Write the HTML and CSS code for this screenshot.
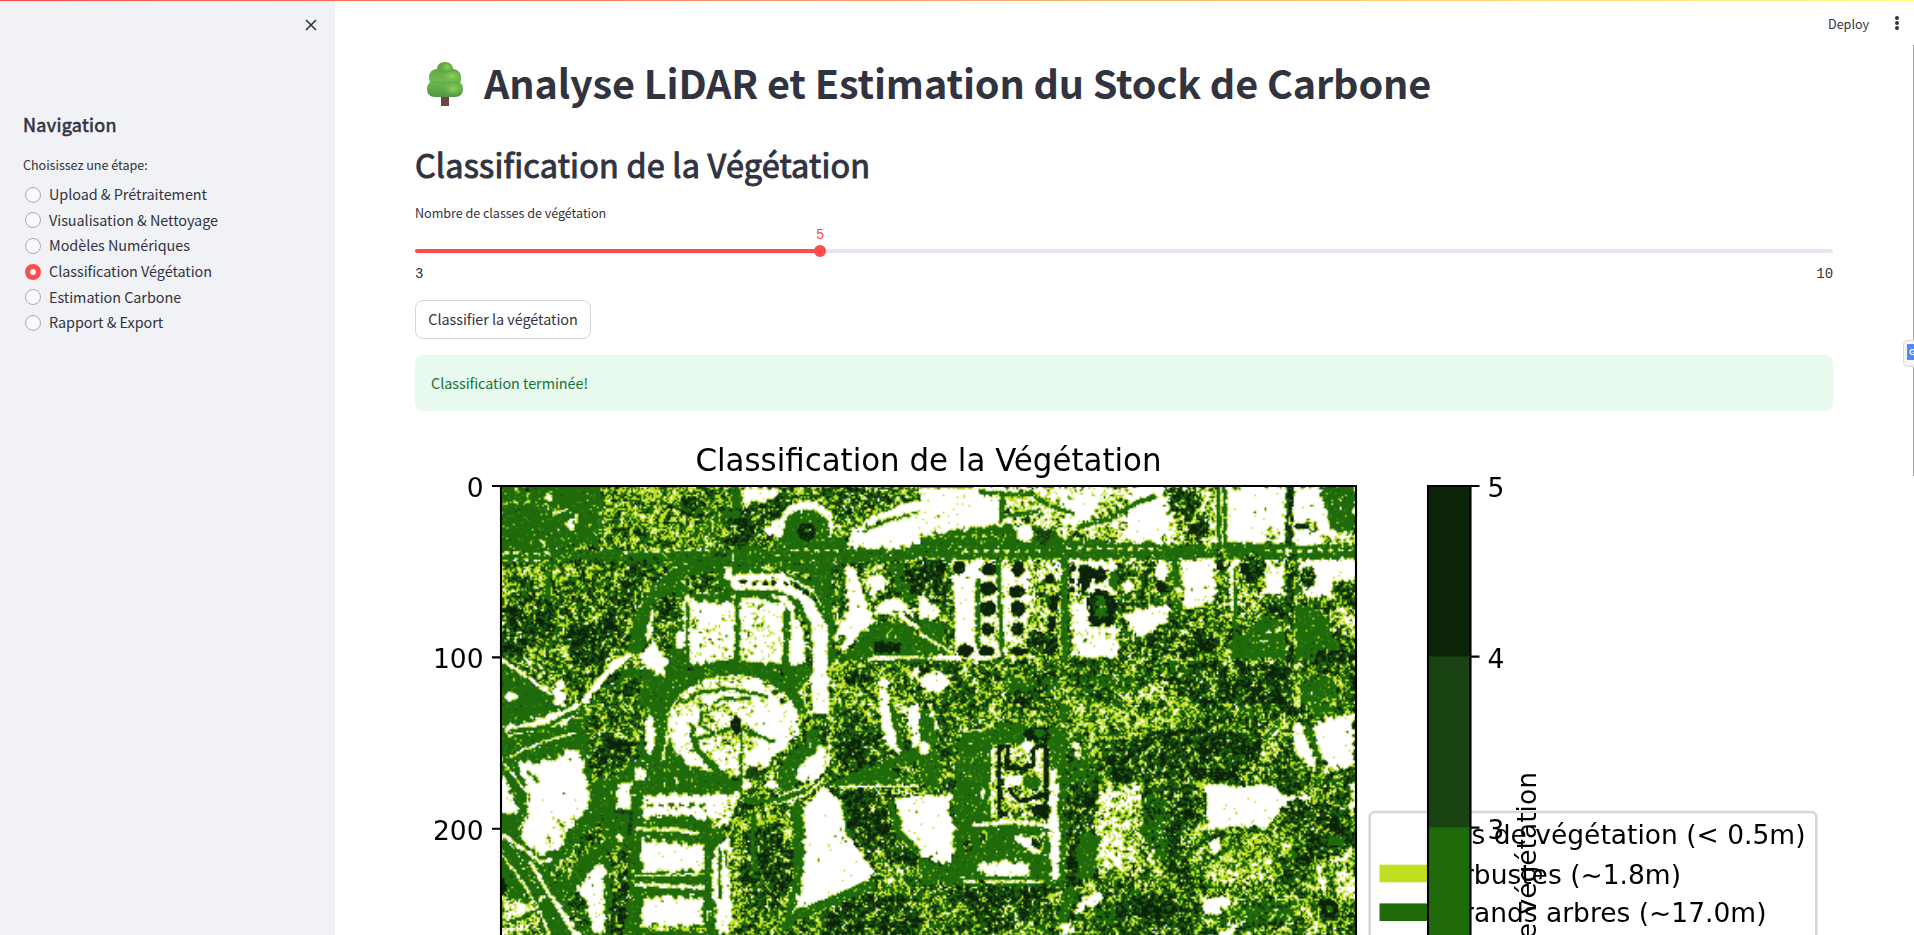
FILE: index.html
```html
<!DOCTYPE html>
<html lang="fr">
<head>
<meta charset="utf-8">
<title>Analyse LiDAR</title>
<link rel="stylesheet" href="styles.css">
</head>
<body>
<div class="decoration"></div>
<div class="app">
  <aside class="sidebar">
    <div class="sidebar-top">
      <svg class="close" viewBox="0 0 12 12" width="12" height="12"><path d="M1 1L11 11M11 1L1 11" stroke="#31333f" stroke-width="1.6" fill="none"/></svg>
    </div>
    <h2 class="nav-title">Navigation</h2>
    <p class="nav-label">Choisissez une étape:</p>
    <div class="radios">
      <label class="radio"><span class="dot"></span><span class="name">Upload &amp; Prétraitement</span></label>
      <label class="radio"><span class="dot"></span><span class="name">Visualisation &amp; Nettoyage</span></label>
      <label class="radio"><span class="dot"></span><span class="name">Modèles Numériques</span></label>
      <label class="radio"><span class="dot on"></span><span class="name">Classification Végétation</span></label>
      <label class="radio"><span class="dot"></span><span class="name">Estimation Carbone</span></label>
      <label class="radio"><span class="dot"></span><span class="name">Rapport &amp; Export</span></label>
    </div>
  </aside>
  <main class="main">
    <header class="toolbar">
      <span class="deploy">Deploy</span>
      <svg class="kebab" viewBox="0 0 4 14" width="4" height="14" fill="#31333f"><circle cx="2" cy="2" r="2"/><circle cx="2" cy="7" r="2"/><circle cx="2" cy="12" r="2"/></svg>
    </header>
    <div class="block">
      <h1 class="title">
        <svg class="tree" viewBox="0 0 36 44" width="36" height="44">
          <defs>
            <linearGradient id="leaf" x1="0" y1="0" x2="0" y2="1"><stop offset="0" stop-color="#5f9f45"/><stop offset=".55" stop-color="#6fb94b"/><stop offset="1" stop-color="#4f9646"/></linearGradient>
            <radialGradient id="shine"><stop offset="0" stop-color="#8fd257"/><stop offset="1" stop-color="#7cc653" stop-opacity="0"/></radialGradient>
          </defs>
          <rect x="14" y="32" width="8" height="12" fill="#6f4448"/>
          <path d="M18 0C13 0 10 3 10 7C5 7 2 11 2 15C2 18 3 19 2.500 21C1 22 0 24 0 27C0 32 3 35 8 35H28C33 35 36 32 36 27C36 24 35 22 33.500 21C34 19 34 17 34 15C34 11 31 7 26 7C26 3 23 0 18 0Z" fill="url(#leaf)"/>
          <ellipse cx="20" cy="5" rx="6" ry="5" fill="url(#shine)"/>
          <ellipse cx="25" cy="14" rx="9" ry="6" fill="url(#shine)"/>
          <ellipse cx="26" cy="27" rx="10" ry="7" fill="url(#shine)"/>
          <path d="M5 20Q18 22 32 20M11 9Q18 12 25 8" stroke="#4b8a42" stroke-opacity=".35" fill="none"/>
        </svg>
        <span class="title-text">Analyse LiDAR et Estimation du Stock de Carbone</span>
      </h1>
      <h2 class="heading">Classification de la Végétation</h2>
      <p class="label">Nombre de classes de végétation</p>
      <div class="slider">
        <div class="track"><div class="fill"></div><div class="thumb"><span class="value">5</span></div></div>
        <div class="ticks"><span>3</span><span>10</span></div>
      </div>
      <button class="button">Classifier la végétation</button>
      <div class="alert">Classification terminée!</div>
      <div class="figure">
        <canvas class="raster" id="raster" width="500" height="264"></canvas>
        <svg class="axes" viewBox="415 427 1418 508" width="1418" height="508">
          <g class="mpl">
            <text x="928.500" y="470.500" class="mpl-title" text-anchor="middle" textLength="466" lengthAdjust="spacingAndGlyphs">Classification de la Végétation</text>
            <g text-anchor="end"><text x="483.600" y="497">0</text><text x="483.600" y="668">100</text><text x="483.600" y="839.500">200</text></g>
            <path d="M501 940V486H1356V940M492 486H501M492 657.400H501M492 828.700H501" class="line"/>
            <rect x="1369.700" y="812" width="446.600" height="160" rx="5" class="legend"/>
            <rect x="1379.500" y="864.700" width="53" height="17.600" fill="#bfdf20"/>
            <rect x="1379.500" y="903.400" width="53" height="17.600" fill="#1f6b0c"/>
            <g text-anchor="end"><text x="1805.500" y="844">Pas de végétation (&lt; 0.5m)</text><text x="1681" y="884">Arbustes (~1.8m)</text><text x="1766.500" y="921.500">Grands arbres (~17.0m)</text></g>
            <rect x="1428" y="486" width="42.500" height="171" fill="#0b2409"/>
            <rect x="1428" y="656.400" width="42.500" height="172" fill="#1a4314"/>
            <rect x="1428" y="827.400" width="42.500" height="120" fill="#1f6b0c"/>
            <path d="M1428 940V486H1470.500V940M1470 486H1479.500M1470 656.600H1479.500M1470 827.600H1479.500" class="line"/>
            <text x="1487.500" y="496.500">5</text><text x="1487.500" y="667.500">4</text><text x="1487.500" y="838.500">3</text>
            <text transform="translate(1536 772) rotate(-90)" text-anchor="end">Classe de végétation</text>
          </g>
        </svg>
      </div>
    </div>
    <div class="scrollbar"></div>
    <div class="extension"><span>G</span></div>
  </main>
</div>
<script src="raster.js"></script>
</body>
</html>
```
FILE: styles.css
```css
* { box-sizing: border-box; }
body {
  margin: 0;
  height: 935px;
  overflow: hidden;
  background: #fff;
  color: #31333f;
  font-family: "Noto Sans CJK SC", "Noto Sans", sans-serif;
  font-size: 14.4px;
  letter-spacing: -0.04px;
}
h1, h2, p { margin: 0; }
.decoration {
  position: absolute;
  top: 0; left: 0;
  width: 100%;
  height: 1px;
  z-index: 3;
  background: linear-gradient(90deg, #ff4b4b, #fffd80);
}
.app { display: flex; height: 935px; }

.sidebar { width: 335px; flex: none; background: #f0f2f6; padding-left: 23px; }
.sidebar-top { height: 104px; padding: 19px 18px 0 0; text-align: right; line-height: 0; }
.nav-title { font-size: 18px; font-weight: 400; -webkit-text-stroke: .6px #31333f; letter-spacing: .3px; line-height: 40px; height: 48px; }
.nav-label { font-size: 12.6px; line-height: 26px; height: 30px; }
.radios { display: flex; flex-direction: column; padding-left: 2px; }
.radio { display: flex; align-items: center; gap: 8px; height: 25.6px; line-height: 24px; }
.name { height: 25px; }
.dot { width: 16px; height: 16px; flex: none; border-radius: 50%; border: 1px solid #a9abb3; background: #f9f9fb; }
.dot.on { border: 5px solid #ff4b4b; background: #fff; }

.main { flex: 1; position: relative; overflow: hidden; }
.toolbar { height: 48px; display: flex; justify-content: flex-end; align-items: center; gap: 26px; padding: 0 15px 2px 0; font-size: 12.6px; }
.block { padding: 0 81px 0 80px; display: flex; flex-direction: column; align-items: stretch; }
.title { display: flex; align-items: center; height: 72px; padding-left: 12px; gap: 21px; font-size: 39.6px; font-weight: 700; letter-spacing: -0.14px; line-height: 66px; white-space: nowrap; }
.title-text { height: 70px; }
.tree { flex: none; }
.heading { height: 82px; padding-top: 1px; font-size: 32.4px; font-weight: 400; -webkit-text-stroke: 1px #31333f; letter-spacing: .2px; line-height: 86px; }
.label { height: 45px; font-size: 12.6px; line-height: 22px; }
.slider { height: 53px; }
.track { position: relative; height: 4px; margin-top: 2px; border-radius: 4px; background: #e3e7f0; }
.fill { width: 28.57%; height: 4px; border-radius: 4px; background: #ff4b4b; }
.thumb { position: absolute; left: 28.57%; top: -4px; width: 12px; height: 12px; margin-left: -6px; border-radius: 50%; background: #ff4b4b; }
.value { position: absolute; left: -4px; width: 20px; top: -18px; text-align: center; color: #ff4b4b; font: 14px/16px "Liberation Mono", monospace; }
.ticks { display: flex; justify-content: space-between; margin-top: 13px; font: 14px/16px "Liberation Mono", monospace; }
.button { align-self: flex-start; width: 176px; height: 39px; padding: 0; border: 1px solid #d6d6d9; border-radius: 8px; background: #fff; color: #31333f; font: inherit; letter-spacing: inherit; line-height: 35px; padding-bottom: 2px; }
.alert { height: 56px; margin-top: 16px; padding-left: 16px; border-radius: 8px; background: #e8f9ee; color: #177233; line-height: 56px; }
.figure { display: grid; margin-top: 16px; height: 508px; overflow: hidden; letter-spacing: 0; }
.raster, .axes { grid-area: 1 / 1; }
.raster { width: 856px; height: 452px; margin: 59px 0 0 86px; }
.axes { position: relative; }
.mpl { font: 26.5px "DejaVu Sans", sans-serif; fill: #000; }
.mpl-title { font-size: 31.8px; }
.line { fill: none; stroke: #000; stroke-width: 2.1; }
.legend { fill: #fff; fill-opacity: .8; stroke: #ccc; stroke-opacity: .8; stroke-width: 2.6; }
.scrollbar { position: absolute; right: 0; top: 45px; width: 1px; height: 431px; background: #a3a3a3; }
.extension { position: absolute; right: 0; top: 340px; width: 11px; height: 27px; padding: 3px 0 0 3px; border: 1px solid #d9d9d9; border-right: 0; border-radius: 5px 0 0 5px; background: #f4f4f4; overflow: hidden; }
.extension span { display: block; width: 16px; height: 16px; padding-left: 2px; background: #4b8bf5; color: #fff; font: bold 9px/16px "Liberation Sans", sans-serif; }
```
FILE: raster.js
```js
// Vegetation classes on a 500-cell-wide grid. Each tile lists shapes in tile units
// (3 units per screen pixel): texture, kind (p polygon, l line, d dashed line, e ellipse), points.
const W = 500, H = 264, CELL = 1.713;
const COLORS = [[255,255,255],[191,223,32],[31,107,12],[26,67,20],[11,36,9],[70,138,16]];
const TEX = {
  W: [.985,.998,1,1], L: [.78,.97,1,1], G: null, K: [0,0,.02,.08], T: [0,0,.1,.9],
  F: [.12,.36,.64,.79], D: [.06,.19,.42,.6], M: [.17,.5,.78,.88],
  S: [.46,.68,.87,.93], N: [.05,.16,.74,.86]
};
const TILES = [
{ x: -11, y: -6, s: `
F p 20,0 1340,0 1340,700 20,700
G p 20,0 345,0 340,100 325,195 20,210
W p 155,45 185,38 180,70 160,65
W p 190,85 225,80 225,95 190,110
W p 228,125 270,95 262,120 248,152 230,145
M d8 40,30 130,25
M d8 40,70 130,65
M p 340,20 720,20 720,200 340,205
N p 600,150 720,60 730,120 640,200
D p 570,60 640,50 630,130 580,120
G p 725,20 755,20 750,100 730,130
W p 755,20 880,28 860,50 800,72 760,102
D p 760,80 860,60 890,90 800,150 750,190 720,160
W p 810,155 870,110 890,170
W e 950,140 82,80
G e 950,150 68,62
G p 860,170 1070,170 1070,220 860,220
F l14 880,70 960,45 1030,70 1045,160
K e 950,155 27,26
G e 952,153 10,8
D p 1035,20 1245,20 1235,65 1130,85 1050,120
W p 1068,212 1080,150 1200,85 1330,40 1330,172 1240,208
G l6 1120,155 1210,115 1300,90
M d10 1130,140 1290,95
G p 20,206 400,212 600,203 1240,206 1320,165 1340,165 1340,245 20,250
W d9 40,220 180,221
W d7 40,240 380,242
W d7 400,216 680,209
W d7 910,210 1060,211
T e 690,226 20,13
N p 180,240 540,240 540,255 180,256
F p 33,262 540,262 460,400 440,520 400,530 250,600 190,600 33,550
M p 33,262 400,262 350,330 33,360
D p 33,380 190,380 190,500 33,520
D p 230,440 420,420 390,530 250,570
D p 390,265 500,262 450,340
G l10 175,262 175,360
G l45 690,255 580,265 510,330 455,420 440,500
G p 540,250 1030,250 1030,560 900,600 540,600
F p 580,285 680,275 690,330 590,340
M l14 820,262 960,290
W l52 745,305 870,305 950,345 990,430 993,540 990,700
W l24 715,270 715,290
G l12 905,305 965,345 1020,440 1022,560
K d10 755,307 900,312
K d10 920,318 985,370
W p 735,350 890,350 945,440 955,550 700,560 590,550 575,360
W l20 475,470 490,400 600,350 700,345
F p 500,350 570,340 570,440 490,470
D p 510,340 560,345 540,400
G p 600,342 730,338 725,372 640,375
L p 598,365 735,365 735,550 598,550
L p 755,358 880,358 890,555 755,555
G l15 743,345 743,550
G l9 592,370 592,550
G l18 890,395 888,550
G l14 800,345 860,365
N l18 925,395 955,470 962,550
D d14 925,395 955,470 962,550
W e 570,480 14,30
G p 510,550 960,550 950,600 880,640 520,620
D d14 600,570 720,572
D e 850,580 30,14
W d8 600,580 820,590
W p 450,530 490,485 530,530 525,590 500,650 470,590
G e 729,735 225,195
L e 729,735 198,150
G l10 560,690 620,640 720,625 830,650
G l8 640,690 690,660 780,655
M d16 830,610 900,690
W p 190,610 220,605 225,690 195,690
G p 33,550 190,640 200,700 33,700
W l12 33,540 80,570 180,640
W l22 270,690 300,640 350,580 410,530
G p 290,690 400,570 450,560 540,600 540,700
F p 300,690 390,590 450,600 460,700
W e 65,650 20,14
F p 1035,330 1070,310 1075,430 1045,430
W p 1060,260 1090,255 1110,300 1155,430 1140,470 1040,465 1040,440 1075,390
G l9 1050,250 1065,290 1040,370
W p 1135,290 1180,280 1190,330 1140,345
W p 1150,400 1170,370 1220,350 1260,385 1330,365 1330,395 1150,405
G p 1190,250 1240,250 1240,300 1290,350 1250,370 1210,310
D p 1240,265 1330,245 1330,330 1260,335
W l18 1060,500 1130,440
G p 1050,540 1130,445 1225,415 1320,500 1330,545
K p 1158,484 1235,486 1232,520 1160,518
W l14 1230,405 1325,475
W l12 1140,535 1320,530
M p 1005,548 1340,548 1340,700 1030,700
D p 1060,560 1150,580 1100,640
W p 1165,600 1195,600 1195,700 1165,700
W l8 1010,550 1010,650
W p 1270,570 1300,560 1325,610 1290,630`},
{ x: 419, y: -6, s: `
F p 0,230 1320,230 1320,700 0,700
W p 0,20 1320,20 1320,250 0,250
G l5 0,22 160,22
S p 220,40 620,30 620,180 420,190 300,130
W p 420,60 560,40 520,110 430,140
G l12 180,38 330,42 400,80 460,100
G l16 250,60 245,120
G l16 480,140 570,115 640,75 700,50
G l12 250,110 350,95
L p 400,24 620,24 620,50 420,50
W p 620,100 730,85 745,185 620,195
G p 0,165 130,150 310,130 400,140 420,175 650,190 1000,190 1320,195 1320,240 0,240
M d9 0,170 300,165
W p 280,135 340,130 335,185 300,185
T p 340,150 370,138 400,160 370,195
W d8 440,205 720,208
W d8 130,215 360,212
W d8 0,235 80,235
S p 740,20 880,20 880,200 745,190
D p 735,20 820,20 850,70 800,120 745,80
D p 800,150 860,100 880,140 840,200
G l12 895,20 900,200
G l10 915,20 915,200
G l12 948,20 940,110
W p 930,40 945,190 1090,185 1085,20 960,20
S e 1055,160 30,20
D l22 1110,20 1108,230
F p 1160,120 1190,115 1195,150 1160,155
K e 1145,140 22,10
G p 1200,20 1305,20 1305,170 1240,150 1215,90
S p 1210,160 1320,150 1320,190 1220,195
W d8 1040,213 1310,210
D p 0,225 60,235 60,330 0,340
W p 0,345 60,380 60,415 0,420
W p 100,240 440,240 440,540 70,540 100,420
L p 260,250 440,250 440,540 200,540
S p 180,240 440,240 440,262 180,262
S p 320,300 430,300 430,540 320,540
F l28 92,360 92,540
G p 0,420 70,430 80,520 0,530
W l9 0,460 85,510
K e 65,262 16,16
K e 118,265 20,20
K e 210,268 22,18
K e 295,268 18,22
G l14 175,300 175,500
G l12 235,245 248,540
K e 205,325 25,20
K e 290,335 24,16
K e 205,385 24,22
K e 295,388 20,24
K e 205,448 20,18
K e 295,445 20,20
K e 135,512 24,18
K e 200,512 22,16
K e 300,515 26,12
K e 390,295 14,16
K e 400,370 14,28
K e 395,430 12,24
K e 390,500 20,24
D e 350,490 30,40
M e 365,320 22,18
M e 370,365 24,18
D e 355,345 30,8
G l20 435,225 435,620
W p 455,245 600,240 600,340 460,345
K d14 460,260 458,345
K p 478,262 565,265 555,300 515,305 500,345 480,330
G e 590,300 22,30
K p 520,335 560,325 585,360 582,440 508,435 505,360
G p 530,350 555,350 565,385 545,420 525,400
F l26 605,240 610,520
L p 455,350 505,360 505,430 595,440 600,530 455,530
F p 610,320 700,300 700,370 640,390
D e 640,270 22,20
W e 625,320 18,20
D l16 690,235 680,320
W e 725,275 20,30
K e 723,323 15,18
G l22 765,240 775,380
M e 770,340 14,20
W p 620,395 745,370 750,425 690,460 640,470 615,420
W p 785,238 890,235 888,370 785,390 790,300
F l32 905,220 910,540
D e 905,250 14,20
S p 800,420 880,410 870,470 830,450
W p 925,235 960,240 955,380 930,400
G l10 950,260 945,500
S p 960,270 1100,230 1100,380 960,400
W p 1040,270 1090,260 1090,340 1030,350
D e 1000,255 40,38
F e 985,310 30,20
F e 1060,370 40,30
G p 930,490 1040,400 1110,450 1110,540 930,530
D l26 1110,230 1108,700
M l10 1128,230 1128,540
W p 1135,240 1320,235 1310,290 1240,350 1150,340
D e 1165,290 22,34
G p 1130,380 1200,390 1250,480 1300,520 1200,540 1125,540
F p 1240,310 1320,290 1320,400 1240,380
S p 1200,390 1320,380 1320,470 1250,460
D p 1180,520 1320,490 1320,590 1200,600
F p 0,540 1320,540 1320,690 0,690
D p 680,560 1110,540 1130,690 850,700
G p 1150,610 1230,590 1260,650 1140,670
W e 45,605 44,32
W e 80,535 60,8
D e 118,590 22,28
D e 385,590 20,14
N p 250,590 430,595 430,630 260,640
N p 470,600 700,595 640,625 480,630
K e 305,670 22,20
M e 940,590 20,22
S p 600,650 740,610 740,650 640,690
D p 620,480 880,450 880,520 700,540
D p 360,470 410,470 400,530`},
{ x: -11, y: 219, s: `
G p 20,0 700,0 700,700 20,700
W p 155,40 240,0 280,0 220,60 60,95 40,65
G l12 60,80 160,70 280,5
W l8 60,155 170,105 260,85
F p 285,0 470,0 470,70 440,180 300,240 290,120
D p 320,60 400,100 430,170 340,200
W e 480,90 16,60
W l10 545,10 520,160
M e 388,87 14,14
W p 85,170 190,165 250,125 275,140 295,260 300,310 250,350 215,425 155,450 90,400 120,290
G l6 110,200 145,230
W p 35,200 85,310 80,335 35,320
W l7 45,180 110,260 120,330 85,375
W p 380,240 440,225 420,260 425,315 380,320
L p 180,300 240,320 220,400 160,430
W l12 40,390 150,470 180,465
W l14 40,400 130,520 260,690
G l12 45,410 140,530 240,690
W l12 120,470 180,570 270,690
W l9 35,450 95,530 150,620 180,690
K e 38,548 12,26
S p 33,570 130,590 160,690 33,690
G l10 50,660 150,610
F p 180,510 230,460 330,350 350,400 280,450 200,540
D e 315,395 30,26
W p 260,550 320,475 345,490 345,690 305,680 290,590
F p 230,550 290,590 280,690 240,640
T l10 378,322 425,325 418,385
W e 388,400 8,14
F p 360,430 410,430 425,500 400,690 355,690
D l26 395,450 405,560 385,690
L e 729,60 200,150
W p 800,0 890,30 905,120 840,180 760,190
G l20 590,40 630,150 700,210
G l10 640,0 630,60 680,90
S p 630,0 720,0 710,60 640,50
S p 680,60 790,60 800,130 690,140
G l9 755,70 752,260
G l10 600,110 740,65 850,110
K e 740,60 16,26
L p 540,0 600,0 600,110 560,140 540,60
G l20 560,170 620,210 740,235
G p 480,170 570,190 750,240 740,265 440,265 430,240
W e 610,165 28,22
W e 450,210 20,20
G p 870,160 900,110 990,60 990,160 900,260 860,250
F p 840,170 950,80 930,120 850,210
T p 775,190 812,190 812,220 775,222
W e 768,240 14,20
W e 845,240 20,12
W p 920,200 1000,110 1010,170 980,225 920,230
W l10 870,275 960,240 1015,180 1020,90
W l8 860,295 950,270 1000,220
G l14 770,290 870,285 950,255
W p 455,268 750,265 720,320 650,350 610,335 455,335
G d9 475,300 660,300
L p 660,270 750,268 720,350 660,380
W l12 445,372 560,375 620,385
W p 455,395 645,420 645,500 455,500
G d10 470,405 620,420
G l12 460,525 630,522
W l14 440,540 640,548
W l6 440,512 640,508
W p 455,575 638,575 638,660 455,665
G l16 655,345 650,690
W p 665,480 685,420 720,405 722,690 690,690 665,560
G l9 690,430 690,580
W l9 735,510 735,560
G l10 705,440 710,480
M l14 480,670 640,675
M p 725,320 870,320 930,430 925,520 890,620 900,690 730,690
D p 760,380 870,350 920,460 860,640 760,560
G l14 790,340 790,490
G l32 920,310 930,520 895,660
W p 940,320 1000,240 1060,290 1080,400 1150,490 1140,535 1010,580 910,635 930,540 945,430
G l10 1060,290 1075,390
F p 1020,0 1160,0 1210,130 1330,190 1330,235 1030,235 1040,120
D p 1040,80 1200,90 1200,210 1060,210
W p 1165,0 1200,0 1235,160 1180,100
G l14 1205,0 1240,150
W p 1245,0 1290,0 1320,110 1270,130
G p 1200,160 1330,110 1330,235 1030,245 1040,225
F p 1200,190 1330,160 1330,230 1210,220
W l7 1050,245 1330,243
W l7 1200,262 1330,262
D p 1060,255 1215,270 1200,380 1260,460 1330,500 1330,700 1000,700 1040,610 1150,540 1160,490 1080,400
M e 1170,455 24,26
W p 1218,275 1335,270 1335,470 1280,435 1240,390
G l18 1205,300 1225,380 1310,470
F p 1160,490 1330,480 1330,570 1160,580
G l30 900,640 1000,600 1145,540
F p 960,640 1020,620 1000,690 940,690
W e 1300,490 16,16`},
{ x: 419, y: 219, s: `
F p 0,0 1320,0 1320,700 0,700
G p 0,0 60,60 60,240 0,240
W l10 30,0 60,90
W e 10,130 20,20
F p 60,0 430,0 430,60 100,90 100,240 60,220
W p 110,100 130,70 210,65 220,90 160,80
G p 120,85 200,75 430,60 430,540 100,540 105,250
K p 315,68 388,66 388,105 315,105
G e 360,85 18,12
M e 330,40 18,26
G l12 235,60 325,65
S p 215,120 390,110 385,350 215,345
W l8 218,140 216,335
L p 265,130 360,130 360,190 265,180
K l14 240,330 238,125 265,125 262,190 300,190 340,180 340,135 378,115 380,340
K l14 262,330 240,325
K l12 268,250 300,290 370,270
K e 358,320 22,22
G e 335,235 28,18
W p 248,210 305,208 305,245 248,250
W e 190,265 6,16
W e 325,120 24,12
W p 390,185 415,190 420,530 395,530 388,380
W l14 165,358 290,352 390,362
F e 285,325 24,20
W p 285,395 370,385 370,450 300,430
D e 350,412 16,18
W p 170,470 330,470 330,515 200,512 170,500
F e 190,395 14,20
F e 140,425 16,20
W l8 130,530 370,530
W l7 425,60 425,180
G l18 430,0 430,690
N p 445,80 530,160 530,240 445,260
W p 455,105 480,110 488,170 460,140
M p 450,0 850,0 850,90 620,120 500,90
D p 560,120 850,60 1030,110 1010,210 560,230
D p 440,240 530,240 540,540 440,540
S p 540,250 680,240 670,380 720,490 620,510 540,480 520,330
N p 680,280 760,290 750,450 720,480 670,400
D p 740,250 830,250 810,520 750,520
G p 480,380 540,390 520,530 470,520
F p 820,230 860,240 850,480 810,470
W p 855,240 1050,242 1100,270 1200,262 1130,300 1070,330 1050,370 940,368 860,375
D p 1100,280 1200,290 1250,350 1180,390 1090,350
S p 1030,60 1100,40 1100,100 1030,200
G l14 1040,100 1080,50
W p 1120,50 1145,60 1195,190 1170,190 1120,140
W p 1175,65 1230,40 1305,30 1305,190 1230,185 1200,150
G l12 1160,60 1200,160
D p 1100,0 1180,10 1160,50 1060,40
G p 1150,0 1250,0 1200,40
K e 1245,355 18,18
D p 1150,390 1300,360 1300,430 1180,440
G e 1250,410 26,16
W p 1235,465 1305,435 1305,455 1250,480
W p 1295,240 1310,240 1310,320 1290,330
W p 868,410 905,400 905,440 885,455
K e 905,215 22,10
M p 910,380 1130,380 1130,500 910,500
S p 850,500 1050,510 1000,540 920,540
F p 1050,450 1200,450 1180,560 1050,560
W l12 1195,480 1215,570
S p 1240,490 1310,500 1310,600 1240,560
W p 845,585 930,570 930,610 850,640
W p 485,580 530,555 550,580 520,600 455,635
G p 440,545 490,550 450,620 430,690
N p 530,610 720,590 720,640 530,650
N p 940,600 1120,580 1110,640 950,690
K e 1230,610 26,28
G e 1230,612 10,12
W p 890,690 940,650 980,650 930,700
S p 1040,670 1120,650 1120,690 1040,690
S p 1160,640 1180,600 1190,690 1160,690
D p 600,600 720,560 800,600 760,690 600,690
W p 0,268 105,270 90,320 105,380 95,470 60,480 0,440
G p 0,450 60,485 100,470 130,540 0,540
F p 0,540 430,540 385,690 0,690
D p 30,540 390,540 390,600 250,690 200,590 40,570
W p 420,660 460,650 460,690 420,690`}
];

function hash(x, y, k) {
  let h = Math.imul(x, 374761393) + Math.imul(y, 668265263) + Math.imul(k, 1274126177);
  h = Math.imul(h ^ (h >>> 13), 1274126177);
  h = Math.imul(h ^ (h >>> 15), 2246822519);
  return ((h ^ (h >>> 16)) >>> 0) / 4294967296;
}
function smooth(x, y, k) {
  const i = Math.floor(x), j = Math.floor(y), a = x - i, b = y - j;
  const u = a * a * (3 - 2 * a), v = b * b * (3 - 2 * b);
  return (hash(i, j, k) * (1 - u) + hash(i + 1, j, k) * u) * (1 - v)
       + (hash(i, j + 1, k) * (1 - u) + hash(i + 1, j + 1, k) * u) * v;
}
const zone = new Array(W * H).fill('F');
function stamp(tile, line) {
  const [tex, kind, ...rest] = line.trim().split(/\s+/);
  const nums = rest.map(p => p.split(',').map(Number));
  const conv = p => [(tile.x + p[0] / 3) / CELL, (tile.y + p[1] / 3) / CELL];
  const unit = 1 / 3 / CELL;
  let pad = 3, test, box;
  if (kind === 'e') {
    const [cx, cy] = conv(nums[0]);
    const rx = nums[1][0] * unit, ry = nums[1][1] * unit;
    box = [cx - rx, cy - ry, cx + rx, cy + ry];
    test = (x, y) => ((x - cx) / rx) ** 2 + ((y - cy) / ry) ** 2 < 1;
  } else {
    const pts = nums.map(conv);
    const xs = pts.map(p => p[0]), ys = pts.map(p => p[1]);
    if (kind === 'p') {
      test = (x, y) => {
        let inside = false;
        for (let i = 0, j = pts.length - 1; i < pts.length; j = i++) {
          const [xi, yi] = pts[i], [xj, yj] = pts[j];
          if ((yi > y) !== (yj > y) && x < (xj - xi) * (y - yi) / (yj - yi) + xi) inside = !inside;
        }
        return inside;
      };
    } else {
      const r = Math.max(.55, +kind.slice(1) * unit / 2), dashed = kind[0] === 'd';
      pad = r + 2;
      test = (x, y) => {
        for (let i = 1; i < pts.length; i++) {
          const [ax, ay] = pts[i - 1], dx = pts[i][0] - ax, dy = pts[i][1] - ay;
          const t = Math.max(0, Math.min(1, ((x - ax) * dx + (y - ay) * dy) / (dx * dx + dy * dy)));
          if (Math.hypot(x - ax - t * dx, y - ay - t * dy) < r) {
            return !dashed || Math.floor(t * Math.hypot(dx, dy)) % 6 < 3;
          }
        }
        return false;
      };
    }
    box = [Math.min(...xs), Math.min(...ys), Math.max(...xs), Math.max(...ys)];
  }
  // The tile frame keeps shapes from running into the neighbouring tile.
  const x0 = Math.max(0, Math.floor(Math.max(box[0] - pad, tile.x / CELL)));
  const y0 = Math.max(0, Math.floor(Math.max(box[1] - pad, tile.y / CELL)));
  const x1 = Math.min(W - 1, Math.ceil(Math.min(box[2] + pad, (tile.x + 440) / CELL)));
  const y1 = Math.min(H - 1, Math.ceil(Math.min(box[3] + pad, (tile.y + 232) / CELL)));
  const thin = kind !== 'p', soft = 'FDMSN'.includes(tex);
  const amp = thin ? 1.3 : soft ? 7 : 3.6;
  for (let y = y0; y <= y1; y++) for (let x = x0; x <= x1; x++) {
    const jx = (smooth(x / 2.2, y / 2.2, 7) - .5) * amp, jy = (smooth(x / 2.2, y / 2.2, 9) - .5) * amp;
    if (test(x + .5 + jx, y + .5 + jy)) zone[y * W + x] = tex;
  }
}
for (const tile of TILES) for (const line of tile.s.trim().split('\n')) stamp(tile, line);

const cls = new Uint8Array(W * H);
for (let y = 0; y < H; y++) for (let x = 0; x < W; x++) {
  const k = y * W + x, w = TEX[zone[k]];
  if (!w) {
    const r = hash(x, y, 5), clump = smooth(x / 2.5, y / 2.5, 13);
    cls[k] = clump > .93 ? 0 : r < .045 ? 5 : r < .06 ? 1 : r > .99 ? 3 : 2;
    continue;
  }
  const solid = 'WKT'.includes(zone[k]);
  const mix = .46 * smooth(x / 1.9, y / 1.9, 3) + .22 * smooth(x / 8, y / 8, 4) + .32 * hash(x, y, 2);
  const u = solid ? hash(x, y, 2) : Math.max(0, Math.min(.9999, (mix - .5) * 1.8 + .5));
  cls[k] = u < w[0] ? 0 : u < w[1] ? 1 : u < w[2] ? 2 : u < w[3] ? 3 : 4;
}
// Open ground next to canopy reads as shrubs.
const out = cls.slice();
for (let y = 1; y < H - 1; y++) for (let x = 1; x < W - 1; x++) {
  const k = y * W + x;
  if (cls[k] === 0 && [k - 1, k + 1, k - W, k + W].some(n => cls[n] >= 2) && hash(x, y, 11) < .5) out[k] = 1;
}
const ctx = document.getElementById('raster').getContext('2d');
const img = ctx.createImageData(W, H);
for (let k = 0; k < W * H; k++) {
  const c = COLORS[out[k]];
  img.data.set([c[0], c[1], c[2], 255], k * 4);
}
ctx.putImageData(img, 0, 0);
```
